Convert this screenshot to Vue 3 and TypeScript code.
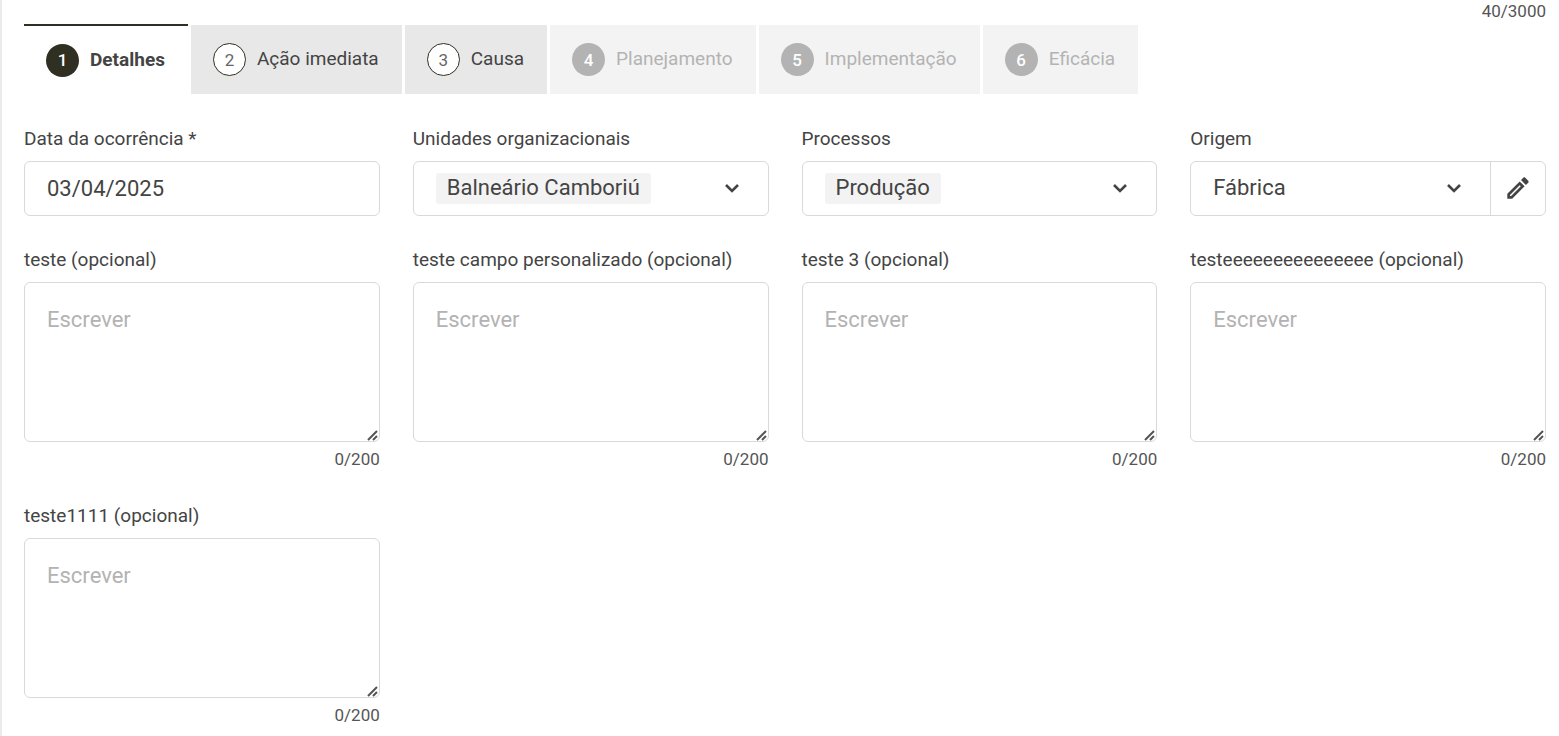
<script setup lang="ts">
import { ref } from 'vue'

interface Step {
  label: string
  state: 'active' | 'available' | 'locked'
}

interface CustomField {
  id: string
  label: string
}

const steps: Step[] = [
  { label: 'Detalhes', state: 'active' },
  { label: 'Ação imediata', state: 'available' },
  { label: 'Causa', state: 'available' },
  { label: 'Planejamento', state: 'locked' },
  { label: 'Implementação', state: 'locked' },
  { label: 'Eficácia', state: 'locked' },
]

const customFields: CustomField[] = [
  { id: 'campo-1', label: 'teste' },
  { id: 'campo-2', label: 'teste campo personalizado' },
  { id: 'campo-3', label: 'teste 3' },
  { id: 'campo-4', label: 'testeeeeeeeeeeeeeee' },
  { id: 'campo-5', label: 'teste1111' },
]

const maxLength = 200
const date = ref('03/04/2025')
const unit = ref('Balneário Camboriú')
const process = ref('Produção')
const origin = ref('Fábrica')
const answers = ref<string[]>(customFields.map(() => ''))
</script>

<template>
  <main class="page">
    <div class="counter">40/3000</div>

    <nav class="steps" aria-label="Etapas">
      <button
        v-for="(step, i) in steps"
        :key="step.label"
        type="button"
        class="step"
        :class="step.state"
        :disabled="step.state === 'locked'"
      >
        <span class="number">{{ i + 1 }}</span>
        <span class="name">{{ step.label }}</span>
      </button>
    </nav>

    <form class="fields" @submit.prevent>
      <div class="field">
        <label for="data">Data da ocorrência *</label>
        <div class="control">
          <input id="data" v-model="date" class="value" type="text" />
        </div>
      </div>

      <div class="field">
        <label for="unidades">Unidades organizacionais</label>
        <div class="control picker">
          <select id="unidades" v-model="unit" class="chip">
            <option>Balneário Camboriú</option>
          </select>
          <svg class="chevron" viewBox="0 0 16 12" aria-hidden="true"><path d="M2 2l6 6 6-6" /></svg>
        </div>
      </div>

      <div class="field">
        <label for="processos">Processos</label>
        <div class="control picker">
          <select id="processos" v-model="process" class="chip">
            <option>Produção</option>
          </select>
          <svg class="chevron" viewBox="0 0 16 12" aria-hidden="true"><path d="M2 2l6 6 6-6" /></svg>
        </div>
      </div>

      <div class="field">
        <label for="origem">Origem</label>
        <div class="control">
          <div class="picker">
            <select id="origem" v-model="origin" class="plain">
              <option>Fábrica</option>
            </select>
            <svg class="chevron" viewBox="0 0 16 12" aria-hidden="true"><path d="M2 2l6 6 6-6" /></svg>
          </div>
          <button type="button" class="edit" aria-label="Editar origem">
            <svg viewBox="0 0 24 24" aria-hidden="true">
              <path
                fill-rule="evenodd"
                d="M1.3 16.8V21.7H6.2L18.6 9.3L13.7 4.4ZM4 19V17.9L13.7 8.2L14.8 9.3L5.1 19ZM22.2 5.7C22.8 5.1 22.8 4.3 22.2 3.7L19.3 .8C18.7 .2 17.9 .2 17.3 .8L15 3.1L19.9 8Z"
              />
            </svg>
          </button>
        </div>
      </div>

      <div v-for="(field, i) in customFields" :key="field.id" class="field">
        <label :for="field.id">{{ field.label }} (opcional)</label>
        <textarea
          :id="field.id"
          v-model="answers[i]"
          placeholder="Escrever"
          :maxlength="maxLength"
        ></textarea>
        <div class="counter">{{ answers[i].length }}/{{ maxLength }}</div>
      </div>
    </form>
  </main>
</template>

<style>
body {
  background: #fff;
}
</style>

<style scoped>
.page {
  box-sizing: border-box;
  min-height: 100vh;
  padding: 0 13px 8px 22px;
  border-left: 2px solid #ebebeb;
  color: #444;
  font-family: Roboto, "Liberation Sans", sans-serif;
  font-size: 19px;
}

button,
input,
select,
textarea {
  box-sizing: border-box;
  margin: 0;
  border: 0;
  background: none;
  color: inherit;
  font: inherit;
}

.counter {
  padding-bottom: 2px;
  color: #555;
  font-size: 17px;
  line-height: 22px;
  text-align: right;
}

.steps {
  display: flex;
  align-items: flex-end;
  gap: 3px;
}

.step {
  display: flex;
  align-items: center;
  gap: 11px;
  height: 69px;
  padding: 0 23px 0 22px;
  line-height: 26px;
  white-space: nowrap;
}

.name {
  padding-bottom: 2px;
}

.number {
  display: flex;
  flex: none;
  align-items: center;
  justify-content: center;
  box-sizing: border-box;
  width: 33px;
  height: 33px;
  border-radius: 50%;
  font-size: 17px;
}

.active {
  height: 70px;
  border-top: 2px solid #2f3021;
  font-weight: 700;
}

.active .name {
  padding-bottom: 0;
}

.active .number {
  background: #2f3021;
  color: #fff;
  font-weight: 500;
}

.available {
  background: #e8e8e8;
}

.available .number {
  border: 1px solid #2f3021;
  background: #fff;
  color: #666;
}

.locked {
  background: #f3f3f3;
  color: #b3b3b3;
}

.locked .number {
  background: #b3b3b3;
  color: #fff;
  font-weight: 500;
}

.fields {
  display: grid;
  grid-template-columns: repeat(4, minmax(0, 1fr));
  gap: 31px 33px;
  margin-top: 32px;
}

.field {
  display: flex;
  flex-direction: column;
}

.field label {
  margin-bottom: 9px;
  line-height: 26px;
}

.control,
textarea {
  border: 1px solid #d9d9d9;
  border-radius: 6px;
  font-size: 22px;
}

.control {
  display: flex;
  box-sizing: border-box;
  height: 55px;
}

.value {
  width: 100%;
  padding: 0 22px;
}

.picker {
  display: flex;
  flex: 1;
  align-items: center;
  justify-content: space-between;
  min-width: 0;
  padding: 0 28px 0 22px;
}

.chip,
.plain {
  appearance: none;
  height: 31px;
  padding-bottom: 2px;
}

.chip {
  field-sizing: content;
  padding: 0 11px 2px;
  border-radius: 3px;
  background: #f3f3f3;
}

.plain {
  flex: 1;
}

.chevron {
  flex: none;
  width: 16px;
  height: 12px;
  fill: none;
  stroke: #444;
  stroke-width: 2.6;
}

.edit {
  display: flex;
  align-items: center;
  justify-content: center;
  width: 55px;
  padding: 0;
  border-left: 1px solid #d9d9d9;
}

.edit svg {
  width: 24px;
  height: 24px;
  fill: #444;
}

textarea {
  height: 160px;
  margin-bottom: 6px;
  padding: 22px;
  line-height: 30px;
  resize: vertical;
}

textarea::placeholder {
  color: #b3b3b3;
}

textarea::-webkit-resizer {
  background: url("data:image/svg+xml,%3Csvg xmlns='http://www.w3.org/2000/svg' width='15' height='15'%3E%3Cpath d='M4 14L13 5M9 14L13 10' stroke='%23555' stroke-width='2'/%3E%3C/svg%3E") no-repeat right bottom;
}
</style>
